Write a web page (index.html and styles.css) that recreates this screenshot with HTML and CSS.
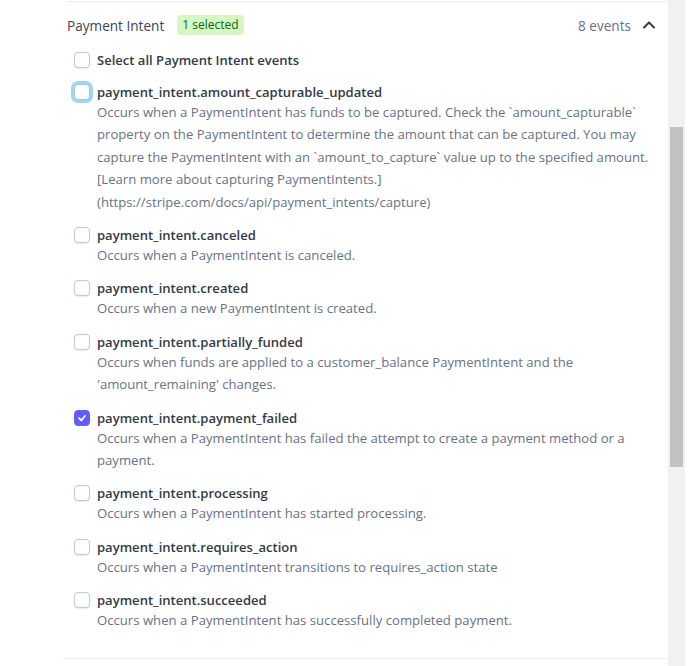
FILE: index.html
```html
<!DOCTYPE html>
<html lang="en">
<head>
<meta charset="utf-8">
<title>Payment Intent events</title>
<link rel="stylesheet" href="styles.css">
</head>
<body>
<div class="viewport">
  <div class="pane">
    <div class="rule-top"></div>
    <section class="group">
      <header class="group-head">
        <span class="group-title">Payment Intent</span>
        <span class="badge">1 selected</span>
        <span class="spacer"></span>
        <span class="count">8 events</span>
        <svg class="chevron" width="14" height="14" viewBox="0 0 14 14" aria-hidden="true"><polyline points="2,9.5 7,4.5 12,9.5" fill="none" stroke="#353a44" stroke-width="2" stroke-linecap="round" stroke-linejoin="round"/></svg>
      </header>
      <ul class="events">
        <li class="event select-all">
          <span class="box"></span>
          <div class="event-body"><div class="event-name all">Select all Payment Intent events</div></div>
        </li>
        <li class="event">
          <span class="box focus"></span>
          <div class="event-body">
            <div class="event-name">payment_intent.amount_capturable_updated</div>
            <div class="event-desc">Occurs when a PaymentIntent has funds to be captured. Check the `amount_capturable` property on the PaymentIntent to determine the amount that can be captured. You may capture the PaymentIntent with an `amount_to_capture` value up to the specified amount. [Learn more about capturing PaymentIntents.] (https://stripe.com/docs/api/payment_intents/capture)</div>
          </div>
        </li>
        <li class="event">
          <span class="box"></span>
          <div class="event-body">
            <div class="event-name">payment_intent.canceled</div>
            <div class="event-desc">Occurs when a PaymentIntent is canceled.</div>
          </div>
        </li>
        <li class="event">
          <span class="box"></span>
          <div class="event-body">
            <div class="event-name">payment_intent.created</div>
            <div class="event-desc">Occurs when a new PaymentIntent is created.</div>
          </div>
        </li>
        <li class="event">
          <span class="box"></span>
          <div class="event-body">
            <div class="event-name">payment_intent.partially_funded</div>
            <div class="event-desc">Occurs when funds are applied to a customer_balance PaymentIntent and the 'amount_remaining' changes.</div>
          </div>
        </li>
        <li class="event">
          <span class="box checked"><svg width="10" height="10" viewBox="0 0 10 10" aria-hidden="true"><polyline points="2,5.2 4.2,7.3 8,3" fill="none" stroke="#fff" stroke-width="1.8" stroke-linecap="round" stroke-linejoin="round"/></svg></span>
          <div class="event-body">
            <div class="event-name">payment_intent.payment_failed</div>
            <div class="event-desc">Occurs when a PaymentIntent has failed the attempt to create a payment method or a payment.</div>
          </div>
        </li>
        <li class="event">
          <span class="box"></span>
          <div class="event-body">
            <div class="event-name">payment_intent.processing</div>
            <div class="event-desc">Occurs when a PaymentIntent has started processing.</div>
          </div>
        </li>
        <li class="event">
          <span class="box"></span>
          <div class="event-body">
            <div class="event-name">payment_intent.requires_action</div>
            <div class="event-desc">Occurs when a PaymentIntent transitions to requires_action state</div>
          </div>
        </li>
        <li class="event">
          <span class="box"></span>
          <div class="event-body">
            <div class="event-name">payment_intent.succeeded</div>
            <div class="event-desc">Occurs when a PaymentIntent has successfully completed payment.</div>
          </div>
        </li>
      </ul>
    </section>
    <div class="rule-bottom"></div>
  </div>
  <div class="scrollbar"><div class="thumb"></div></div>
</div>
</body>
</html>
```

FILE: styles.css
```css
html, body {
  margin: 0;
  padding: 0;
  background: #ffffff;
}
body {
  font-family: "Open Sans", "Noto Sans", "Liberation Sans", sans-serif;
  color: #353a44;
}
.viewport {
  display: flex;
  width: 685px;
  height: 666px;
  overflow: hidden;
}
.pane {
  flex: 1;
  min-width: 0;
  padding-left: 63px;
}
.rule-top {
  margin: 1px 0 0 4px;
  height: 1px;
  background: #ebeef1;
}
.group {
  padding: 13px 12px 26px 0;
}
.group-head {
  display: flex;
  align-items: center;
  height: 20px;
  padding-left: 4px;
  font-size: 13.6px;
}
.group-title {
  color: #414552;
  margin-right: 13px;
}
.badge {
  background: #d7f7c2;
  color: #05690d;
  border-radius: 4px;
  padding: 0 5px;
  height: 20px;
  line-height: 20px;
  font-size: 12px;
  font-weight: 500;
}
.spacer { flex: 1; }
.count {
  color: #687385;
  margin-right: 11px;
}
.chevron { display: block; }
.events {
  list-style: none;
  margin: 16px 0 0 0;
  padding: 0 0 0 11px;
  display: flex;
  flex-direction: column;
  gap: 13px;
}
.select-all { margin-bottom: 1px; }
.event {
  display: flex;
  align-items: flex-start;
}
.box {
  flex: none;
  box-sizing: border-box;
  width: 16px;
  height: 16px;
  margin-top: 1px;
  margin-right: 7px;
  border: 1px solid #c0c8d2;
  border-radius: 4px;
  background: #fff;
  box-shadow: 0 1px 1px rgba(0, 0, 0, 0.08);
  display: flex;
  align-items: center;
  justify-content: center;
}
.box.focus {
  border-color: #a6c6e0;
  box-shadow: 0 0 0 3px #a3d4f7;
}
.box.checked {
  background: #635bff;
  border-color: #635bff;
  box-shadow: none;
}
.event-body {
  flex: 1;
  min-width: 0;
}
.event-name {
  font-size: 13.05px;
  line-height: 18px;
  font-weight: 600;
  color: #353a44;
}
.event-desc {
  font-size: 13.15px;
  line-height: 22.4px;
  color: #687385;
}
.rule-bottom {
  height: 1px;
  background: #ebeef1;
}
.scrollbar {
  flex: none;
  width: 17px;
  height: 666px;
  background: #f1f1f1;
  padding-top: 127px;
  box-sizing: border-box;
}
.thumb {
  width: 13px;
  height: 340px;
  margin: 0 2px;
  background: #c1c1c1;
}
```
